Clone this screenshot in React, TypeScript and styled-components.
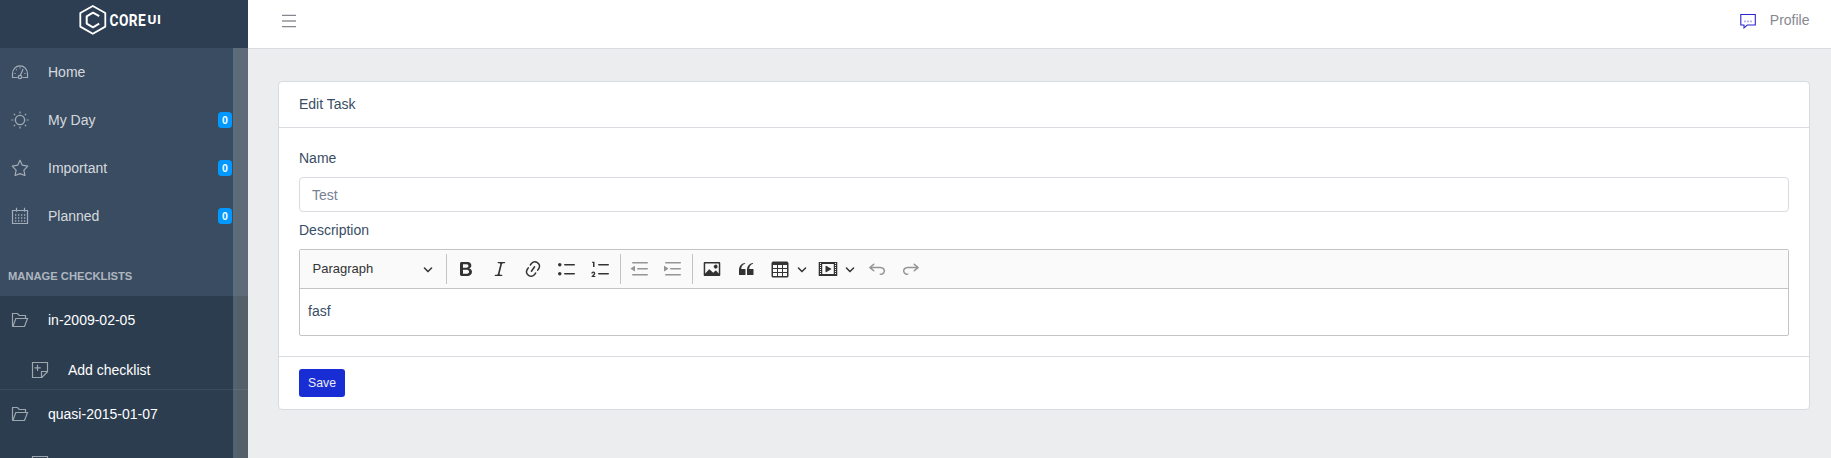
import React from 'react';
import styled, { createGlobalStyle } from 'styled-components';

const Global = createGlobalStyle`
  *, *::before, *::after { box-sizing: border-box; }
  body { margin: 0; background: #ebedef; color: #394d64; font: 14px/21px "Liberation Sans", Arial, sans-serif; overflow: hidden; }
`;

const Shell = styled.div`display: flex; height: 458px; overflow: hidden;`;
const Sidebar = styled.aside`
  position: relative; flex: 0 0 248px; display: flex; flex-direction: column;
  background: #394c62; overflow: hidden; color: rgba(255,255,255,.8);
`;
const Brand = styled.div`
  flex: 0 0 48px; background: #2d3d52; display: flex; justify-content: center; padding: 0 8px 0 0;
`;
const Scrollbar = styled.div`
  position: absolute; top: 48px; right: 0; bottom: 0; width: 15px;
  background: rgba(200,195,185,.26); border-left: 4px solid rgba(70,130,150,.12);
`;
const NavItem = styled.a<{ $bright?: boolean }>`
  flex: 0 0 48px; display: flex; align-items: center; padding: 0 16px 0 11px;
  color: ${p => (p.$bright ? '#fff' : 'rgba(255,255,255,.8)')};
`;
const NavIcon = styled.svg`
  flex: none; width: 18px; height: 18px; margin-right: 19px;
  fill: none; stroke: rgba(255,255,255,.54); stroke-width: 1.2;
`;
const Badge = styled.span`
  width: 14px; height: 16px; margin-left: auto; border-radius: 3.5px; background: #0199ff; color: #fff;
  font-size: 10.5px; font-weight: 700; line-height: 16px; text-align: center;
`;
const NavTitle = styled.div`
  flex: 0 0 56px; padding: 26px 8px 0; font-size: 11.2px; line-height: 20px; font-weight: 700;
  text-transform: uppercase; color: rgba(255,255,255,.6);
`;
const Group = styled.div`
  flex: 0 0 94px; display: flex; flex-direction: column; background: #2c3d4f; border-bottom: 1px solid #3a4a5d;
`;
const SubItem = styled(NavItem)`flex: 0 0 45px; padding: 7px 16px 0 31px;`;

const Main = styled.main`flex: 1; display: flex; flex-direction: column; min-width: 0;`;
const Header = styled.header`
  flex: 0 0 49px; display: flex; align-items: flex-start; justify-content: space-between;
  padding: 10px 21.5px 0 34px; background: #fff; border-bottom: 1px solid #d8dbe0;
`;
const Profile = styled.a`display: flex; gap: 12.5px; color: #858991;`;
const Card = styled.section`
  margin: 32px 21px 0 30px; background: #fff; border: 1px solid #d8dbe0; border-radius: 4px;
`;
const CardHeader = styled.div`height: 46px; padding: 12px 20px; border-bottom: 1px solid #d8dbe0;`;
const CardBody = styled.div`padding: 20px 20px; height: 228px; display: flex; flex-direction: column;`;
const Label = styled.label`display: block; margin-bottom: 8px;`;
const Input = styled.input`
  height: 35px; width: 100%; flex: none; padding: 5px 12px; margin-bottom: 8px; border: 1px solid #d8dbe0; border-radius: 4px;
  font: inherit; color: #768192; background: #fff; outline: none;
`;
const Editor = styled.div`flex: none; height: 87px; border: 1px solid #c4c4c4; border-radius: 2px;`;
const Toolbar = styled.div`
  height: 39px; display: flex; align-items: center; background: #fafafa; border-bottom: 1px solid #c4c4c4; color: #333;
`;
const Heading = styled.div`
  width: 146px; display: flex; align-items: center; justify-content: space-between; padding: 0 13px 0 12.500px;
  font-size: 13px;
`;
const HeadingText = styled.span`padding-bottom: 2px;`;
const Separator = styled.span`width: 1px; height: 30px; background: #c4c4c4; margin: 0 2.3px 0 2px; &:first-child { margin-left: 0; margin-right: 2.1px; }`;
const Tool = styled.span<{ $off?: boolean }>`
  width: 33.7px; display: flex; justify-content: center; opacity: ${p => (p.$off ? 0.5 : 1)};
  svg { display: block; width: 20px; height: 20px; fill: #333; }
`;
const Tools = styled.div`display: flex; align-items: center;`;
const Arrow = styled.svg`width: 10px; height: 10px; flex: none; fill: #333;`;
const SplitArrow = styled(Arrow)`margin: 0 5px 0 0;`;
const Content = styled.div`padding: 12px 8px;`;
const CardFooter = styled.div`height: 53px; padding: 12px 20px; border-top: 1px solid #d8dbe0;`;
const Save = styled.button`
  display: block; width: 46px; height: 28px; padding: 0; border: 0; border-radius: 3px; background: #192dd5; color: #ebedef;
  font: 12.25px/28px "Liberation Sans", Arial, sans-serif;
`;

const arrowPath = 'M.941 4.523a.75.75 0 1 1 1.06-1.06l3.006 3.005 3.005-3.005a.75.75 0 1 1 1.06 1.06l-3.549 3.55a.75.75 0 0 1-1.168-.136L.941 4.523z';
const lineTop = 'M7 5.75c0 .414.336.75.75.75h9.5a.75.75 0 1 0 0-1.5h-9.5a.75.75 0 0 0-.75.75z';
const lineBottom = 'M7 14.75c0 .414.336.75.75.75h9.5a.75.75 0 1 0 0-1.5h-9.5a.75.75 0 0 0-.75.75z';
const dentLines = 'M2 3.75c0 .414.336.75.75.75h14.5a.75.75 0 1 0 0-1.5H2.75a.75.75 0 0 0-.75.75zm5 6c0 .414.336.75.75.75h9.5a.75.75 0 1 0 0-1.5h-9.5a.75.75 0 0 0-.75.75zM2.75 16.5h14.5a.75.75 0 1 0 0-1.5H2.75a.75.75 0 1 0 0 1.5z';
const undoPath = 'm5.042 9.367 2.189 1.837a.75.75 0 0 1-.965 1.149l-3.788-3.18a.747.747 0 0 1-.21-.284.75.75 0 0 1 .17-.945L6.23 4.762a.75.75 0 1 1 .964 1.15L4.863 7.866h8.917A.75.75 0 0 1 14 7.9a4 4 0 1 1-1.477 7.718l.344-1.489a2.5 2.5 0 1 0 1.094-4.73l.008-.032H5.042z';
const icons = {
  bold: 'M10.187 17H5.773c-.637 0-1.092-.138-1.364-.415-.273-.277-.409-.718-.409-1.323V4.738c0-.617.14-1.062.419-1.332.279-.27.73-.406 1.354-.406h4.68c.69 0 1.288.041 1.793.124.506.083.96.242 1.36.478.341.197.644.447.906.75a3.262 3.262 0 0 1 .808 2.162c0 1.401-.722 2.426-2.167 3.075C15.05 10.175 16 11.315 16 13.01a3.756 3.756 0 0 1-2.296 3.504 6.1 6.1 0 0 1-1.517.377c-.571.073-1.238.11-2 .11zm-.217-6.217H7v4.087h3.069c1.977 0 2.965-.69 2.965-2.072 0-.707-.256-1.22-.768-1.537-.512-.319-1.277-.478-2.296-.478zM7 5.13v3.619h2.606c.729 0 1.292-.067 1.69-.2a1.6 1.6 0 0 0 .91-.765c.165-.267.247-.566.247-.897 0-.707-.26-1.176-.778-1.409-.519-.232-1.31-.348-2.375-.348H7z',
  italic: 'm9.586 14.633.021.004c-.036.335.095.655.393.962.082.083.173.15.274.201h1.474a.6.6 0 1 1 0 1.2H5.304a.6.6 0 0 1 0-1.2h1.15c.474-.07.809-.182 1.005-.334.157-.122.291-.32.404-.597l2.416-9.55a1.053 1.053 0 0 0-.281-.823 1.12 1.12 0 0 0-.442-.296H8.15a.6.6 0 0 1 0-1.2h6.443a.6.6 0 1 1 0 1.2h-1.195c-.376.056-.65.155-.823.296-.215.175-.423.439-.623.79l-2.366 9.347z',
  link: 'm11.077 15 .991-1.416a.75.75 0 1 1 1.229.86l-1.148 1.64a.748.748 0 0 1-.217.206 5.251 5.251 0 0 1-8.503-5.955.741.741 0 0 1 .12-.274l1.147-1.639a.75.75 0 1 1 1.228.86L4.933 10.7l.006.003a3.75 3.75 0 0 0 6.132 4.294l.006.004zm5.494-5.335a.748.748 0 0 1-.12.274l-1.147 1.639a.75.75 0 1 1-1.228-.86l.86-1.23a3.75 3.75 0 0 0-6.144-4.301l-.86 1.229a.75.75 0 0 1-1.229-.86l1.148-1.64a.748.748 0 0 1 .217-.206 5.251 5.251 0 0 1 8.503 5.955zm-4.563-2.532a.75.75 0 0 1 .184 1.045l-3.155 4.505a.75.75 0 1 1-1.229-.86l3.155-4.506a.75.75 0 0 1 1.045-.184z',
  bullets: lineTop + lineBottom + 'M1 5.75a1.75 1.75 0 1 0 3.5 0a1.75 1.75 0 1 0-3.5 0zM1 14.75a1.75 1.75 0 1 0 3.5 0a1.75 1.75 0 1 0-3.5 0z',
  numbers: lineTop + lineBottom + 'M3.5 3v5H2V3.7H1v-1h2.5V3zM.343 17.857l2.59-3.257H2.92a.6.6 0 1 0-1.04 0H.302a2 2 0 1 1 3.995 0h-.001c-.048.405-.16.734-.333.988-.175.254-.59.692-1.244 1.312H4.3v1h-4l.043-.043z',
  outdent: dentLines + 'M4.368 6.95.98 9.358a.4.4 0 0 0 .013.661l3.39 2.207A.4.4 0 0 0 5 11.892V7.275a.4.4 0 0 0-.632-.326z',
  indent: dentLines + 'M1.632 6.95 5.02 9.358a.4.4 0 0 1-.013.661l-3.39 2.207A.4.4 0 0 1 1 11.892V7.275a.4.4 0 0 1 .632-.326z',
  image: 'M6.91 10.54c.26-.23.64-.21.88.03l3.36 3.14 2.23-2.06a.64.64 0 0 1 .87 0l2.52 2.97V4.5H3.2v10.12l3.71-4.08zm10.27-7.51c.6 0 1.09.47 1.09 1.05v11.84c0 .59-.49 1.06-1.09 1.06H2.79c-.6 0-1.09-.47-1.09-1.06V4.08c0-.58.49-1.05 1.1-1.05h14.38zm-5.22 5.56a1.96 1.96 0 1 1 3.4-1.96 1.96 1.96 0 0 1-3.4 1.96z',
  quote: 'M3 10.423a6.5 6.5 0 0 1 6.056-6.408l.038.67C6.448 5.423 5.354 7.663 5.22 10H9c.552 0 .5.432.5.986v4.511c0 .554-.448.503-1 .503h-5c-.552 0-.5-.449-.5-1.003v-4.574zm8 0a6.5 6.5 0 0 1 6.056-6.408l.038.67c-2.646.739-3.74 2.979-3.873 5.315H17c.552 0 .5.432.5.986v4.511c0 .554-.448.503-1 .503h-5c-.552 0-.5-.449-.5-1.003v-4.574z',
  table: 'M3 6v3h4V6H3zm0 4v3h4v-3H3zm0 4v3h4v-3H3zm5 3h4v-3H8v3zm5 0h4v-3h-4v3zm4-4v-3h-4v3h4zm0-4V6h-4v3h4zm1.5 8a1.5 1.5 0 0 1-1.5 1.5H3A1.5 1.5 0 0 1 1.5 17V4c.222-.863 1.068-1.5 2-1.5h13c.932 0 1.778.637 2 1.5v13zM12 13v-3H8v3h4zm0-4V6H8v3h4z',
  media: 'M18.68 3.03c.6 0 .59-.03.59.55v12.84c0 .59.01.56-.59.56H1.29c-.6 0-.59.03-.59-.56V3.58c0-.58-.01-.55.6-.55h17.38zM15.77 15V5H4.2v10h11.57zM2 4v1h1V4H2zm0 2v1h1V6H2zm0 2v1h1V8H2zm0 2v1h1v-1H2zm0 2v1h1v-1H2zm0 2v1h1v-1H2zM17 4v1h1V4h-1zm0 2v1h1V6h-1zm0 2v1h1V8h-1zm0 2v1h1v-1h-1zm0 2v1h1v-1h-1zm0 2v1h1v-1h-1zM7.5 7.177a.4.4 0 0 1 .593-.351l5.133 2.824a.4.4 0 0 1 0 .7l-5.133 2.824a.4.4 0 0 1-.593-.35V7.176v.001z',
};

const ToolIcon = ({ d, off, flip }: { d: string; off?: boolean; flip?: boolean }) => (
  <Tool $off={off}>
    <svg viewBox="0 0 20 20"><path fillRule="evenodd" d={d} transform={flip ? 'translate(20 0) scale(-1 1)' : undefined} /></svg>
  </Tool>
);

const Folder = () => (
  <NavIcon viewBox="0 0 18 18">
    <path d="M1.500 15.500V2.500h5l1.700 2h6.300v2.800M1.300 15.500h12.200L16.500 7.500H4.800L2 15.400" />
  </NavIcon>
);
const Note = () => (
  <NavIcon viewBox="0 0 18 18">
    <path d="M1.500 1.500h15v9.200l-5.600 5.800H1.500zM16.500 10.500h-6v6M6.500 3.700v6.200M3.500 6.800h6.200" />
  </NavIcon>
);

export default function App() {
  return (
    <Shell>
      <Global />
      <Sidebar>
        <Brand>
          <svg width="84" height="48" viewBox="78 0 84 48">
            <g fill="none" stroke="#fff" strokeWidth="1.8" strokeLinejoin="round">
              <path d="M92.800 6l12.500 7v13.600L92.800 33.800l-12.500-7.200V13z" />
              <path strokeWidth="2" d="M99.200 16.200L93 12.700l-6.300 3.600v7.300l6.300 3.700 6.200-3.600" />
            </g>
            <g fill="#fff" fontFamily="Roboto, sans-serif" fontWeight="700">
              <text transform="translate(109.600 26) scale(.83 1)" fontSize="16.500" letterSpacing=".500">CORE</text>
              <text transform="translate(147.600 23.600)" fontSize="13.500" letterSpacing=".400">UI</text>
            </g>
          </svg>
        </Brand>
        <NavItem>
          <NavIcon viewBox="0 0 18 18">
            <path d="M6.500 14.500h-5V10.600a7.500 7.700 0 0 1 15 0v3.900h-5M9.500 12l2.600-6" />
            <circle cx="9" cy="14" r="1.700" />
            <path d="M3.500 10.500h1.200M13.300 10.500h1.200M5 6.300l.9.900M9 4.300v1.300" />
          </NavIcon>
          Home
        </NavItem>
        <NavItem>
          <NavIcon viewBox="0 0 18 18">
            <circle cx="9" cy="9" r="4.600" strokeWidth="1.300" />
            <path d="M9 .4v2M9 15.600v2M.4 9h2M15.600 9h2M2.900 2.900l1.200 1.200M13.900 13.900l1.200 1.200M2.900 15.100l1.200-1.200M13.900 4.100l1.200-1.200" />
          </NavIcon>
          My Day<Badge>0</Badge>
        </NavItem>
        <NavItem>
          <NavIcon viewBox="0 0 18 18">
            <path strokeLinejoin="round" d="M9 1.300l2.300 4.900 5.500.9-3.900 4 1 5.400L9 14.600l-4.900 1.900 1-5.400-3.900-4 5.500-.9z" />
          </NavIcon>
          Important<Badge>0</Badge>
        </NavItem>
        <NavItem>
          <NavIcon viewBox="0 0 18 18">
            <path d="M1.500 3.500h15v13h-15zM5.500 .8v4M13.500 .8v4" />
            <path strokeDasharray="1.300 1.700" strokeWidth="1.300" d="M4 8h11M4 11h11M4 14h11" />
          </NavIcon>
          Planned<Badge>0</Badge>
        </NavItem>
        <NavTitle>Manage Checklists</NavTitle>
        <Group>
          <NavItem $bright><Folder />in-2009-02-05</NavItem>
          <SubItem $bright><Note />Add checklist</SubItem>
        </Group>
        <Group>
          <NavItem $bright><Folder />quasi-2015-01-07</NavItem>
          <SubItem $bright><Note /></SubItem>
        </Group>
        <Scrollbar />
      </Sidebar>
      <Main>
        <Header>
          <svg width="14" height="21" viewBox="0 0 14 21">
            <path d="M0 5.300h14M0 16.700h14" stroke="#85868f" strokeWidth="1.200" />
            <path d="M0 11h14" stroke="#aeafb5" strokeWidth="2" />
          </svg>
          <Profile>
            <svg width="17" height="21" viewBox="0 0 17 21" fill="none" stroke="#2a23d2">
              <path d="M.8 4.500h14.500v10.500H7.300L4 17.800V15H.8z" strokeWidth="1.100" />
              <path d="M4 11.400h8" strokeDasharray="2 1" strokeWidth="1.600" opacity=".35" />
            </svg>
            Profile
          </Profile>
        </Header>
        <Card>
          <CardHeader>Edit Task</CardHeader>
          <CardBody>
            <Label>Name</Label>
            <Input defaultValue="Test" />
            <Label>Description</Label>
            <Editor>
              <Toolbar>
                <Heading><HeadingText>Paragraph</HeadingText><Arrow viewBox="0 0 10 10"><path d={arrowPath} /></Arrow></Heading>
                <Tools>
                  <Separator />
                  <ToolIcon d={icons.bold} />
                  <ToolIcon d={icons.italic} />
                  <ToolIcon d={icons.link} />
                  <ToolIcon d={icons.bullets} />
                  <ToolIcon d={icons.numbers} />
                  <Separator />
                  <ToolIcon d={icons.outdent} off />
                  <ToolIcon d={icons.indent} off />
                  <Separator />
                  <ToolIcon d={icons.image} />
                  <ToolIcon d={icons.quote} />
                  <ToolIcon d={icons.table} />
                  <SplitArrow viewBox="0 0 10 10"><path d={arrowPath} /></SplitArrow>
                  <ToolIcon d={icons.media} />
                  <SplitArrow viewBox="0 0 10 10"><path d={arrowPath} /></SplitArrow>
                  <ToolIcon d={undoPath} off />
                  <ToolIcon d={undoPath} off flip />
                </Tools>
              </Toolbar>
              <Content>fasf</Content>
            </Editor>
          </CardBody>
          <CardFooter><Save>Save</Save></CardFooter>
        </Card>
      </Main>
    </Shell>
  );
}
